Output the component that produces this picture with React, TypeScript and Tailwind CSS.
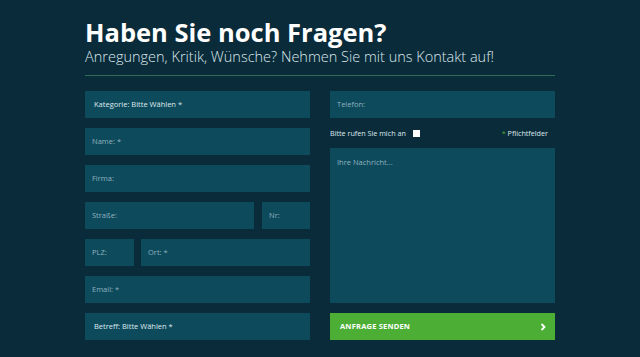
import React from 'react';

const field =
  'h-[27px] bg-[#0d4a5c] flex items-center px-[7px] text-[7.5px] text-[#8fb2bf]';

const App = () => {
  return (
    <div className="w-[640px] h-[357px] bg-[#0a2b3a] overflow-hidden font-['Open_Sans',sans-serif]">
      <div className="w-[470px] mx-auto pt-[18px]">
        <h1 className="text-[25.5px] leading-[28px] font-bold text-white">Haben Sie noch Fragen?</h1>
        <p className="mt-[2px] text-[14.5px] leading-[18px] font-light text-[#dce8ec]">
          Anregungen, Kritik, Wünsche? Nehmen Sie mit uns Kontakt auf!
        </p>
        <div className="mt-[9px] h-px bg-[#2f6b58]" />

        <div className="mt-[15px] grid grid-cols-2 gap-x-[20px]">
          {/* linke Spalte */}
          <div className="flex flex-col gap-[10px]">
            <div className={field + ' pl-[9px] text-[#dfeaee]'}>Kategorie: Bitte Wählen *</div>
            <div className={field}>Name: *</div>
            <div className={field}>Firma:</div>
            <div className="flex gap-[8px]">
              <div className={field + ' flex-1'}>Straße:</div>
              <div className={field + ' w-[48px]'}>Nr:</div>
            </div>
            <div className="flex gap-[7px]">
              <div className={field + ' w-[49px]'}>PLZ:</div>
              <div className={field + ' flex-1'}>Ort: *</div>
            </div>
            <div className={field}>Email: *</div>
            <div className={field + ' pl-[9px] text-[#dfeaee]'}>Betreff: Bitte Wählen *</div>
          </div>

          {/* rechte Spalte */}
          <div className="flex flex-col">
            <div className={field}>Telefon:</div>
            <div className="h-[30px] flex items-center justify-between text-[7.2px] text-[#dfeaee]">
              <div className="flex items-center pt-[1px]">
                <span>Bitte rufen Sie mich an</span>
                <span className="ml-[7px] w-[7px] h-[7px] bg-white inline-block" />
              </div>
              <span className="mr-[7px] pt-[1px]">
                <span className="text-[#4cae34]">*</span> Pflichtfelder
              </span>
            </div>
            <div className="h-[155px] bg-[#0d4a5c] px-[7px] pt-[9px] text-[7.5px] text-[#8fb2bf]">
              Ihre Nachricht...
            </div>
            <div className="mt-[10px] h-[27px] bg-[#4cae34] flex items-center justify-between px-[10px] text-white">
              <span className="text-[7.5px] font-bold tracking-[0.2px]">ANFRAGE SENDEN</span>
              <svg width="7" height="8" viewBox="0 0 7 8" className="mr-[-2px]">
                <path d="M1.5 1 L4.5 4 L1.5 7" stroke="white" strokeWidth="1.8" fill="none" />
              </svg>
            </div>
          </div>
        </div>
      </div>
    </div>
  );
};

export default App;
